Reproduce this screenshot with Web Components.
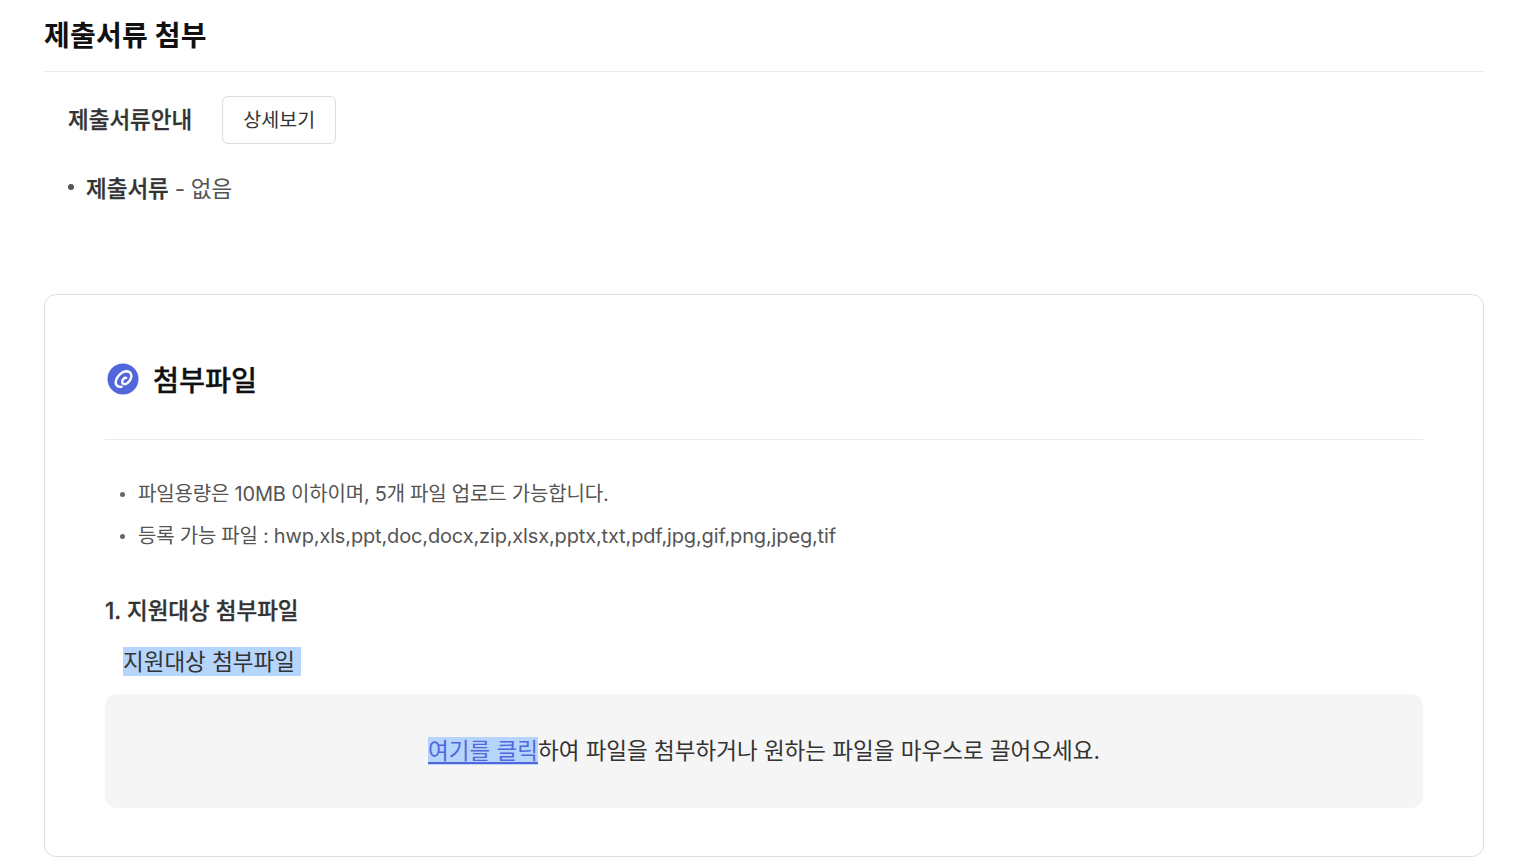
<!DOCTYPE html>
<html lang="ko">
<head>
<meta charset="utf-8">
<title>제출서류 첨부</title>
<style>
    html, body { margin: 0; background: #fff; }
    body {
        font-family: Inter, "Noto Sans CJK KR", sans-serif;
        color: #333;
        overflow: hidden;
    }
</style>
</head>
<body>
<doc-section heading="제출서류 첨부">
    <doc-guide label="제출서류안내" action="상세보기">
        <b>제출서류</b> - 없음
    </doc-guide>
    <attach-card heading="첨부파일">
        <file-rule>파일용량은 10MB 이하이며, 5개 파일 업로드 가능합니다.</file-rule>
        <file-rule>등록 가능 파일 : hwp,xls,ppt,doc,docx,zip,xlsx,pptx,txt,pdf,jpg,gif,png,jpeg,tif</file-rule>
        <attach-group slot="groups" heading="1. 지원대상 첨부파일" label="지원대상 첨부파일"></attach-group>
    </attach-card>
</doc-section>

<script>
class DocSection extends HTMLElement {
    constructor() {
        super();
        this.attachShadow({ mode: 'open' });
        this.shadowRoot.innerHTML = `
            <style>
                :host {
                    display: block;
                    padding: 0 46px 0 44px;
                }
                h2 {
                    margin: 0;
                    height: 71px;
                    line-height: 72px;
                    font-size: 28px;
                    font-weight: 700;
                    letter-spacing: 0.2px;
                    color: #111;
                    border-bottom: 1px solid #ebebeb;
                }
            </style>
            <h2>${this.getAttribute('heading')}</h2>
            <slot></slot>
        `;
    }
}

class DocGuide extends HTMLElement {
    constructor() {
        super();
        this.attachShadow({ mode: 'open' });
        this.shadowRoot.innerHTML = `
            <style>
                :host {
                    display: block;
                    padding: 24px 0 0 24px;
                    height: 198px;
                    box-sizing: border-box;
                    margin-bottom: 24px;
                }
                .row {
                    display: flex;
                    align-items: center;
                    gap: 30px;
                }
                .label {
                    padding-bottom: 5px;
                    font-size: 22.5px;
                    font-weight: 500;
                    -webkit-text-stroke: 0.3px #333;
                    color: #333;
                }
                button {
                    width: 114px;
                    height: 48px;
                    padding: 0 0 3px;
                    font: inherit;
                    font-size: 19.5px;
                    color: #333;
                    background: #fff;
                    border: 1px solid #ddd;
                    border-radius: 6px;
                }
                .item {
                    display: flex;
                    align-items: center;
                    margin-top: 27px;
                    font-size: 22.5px;
                    line-height: 36px;
                    word-spacing: -0.5px;
                    color: #555;
                }
                .item::before {
                    content: "";
                    width: 6px;
                    height: 6px;
                    margin-right: 12px;
                    margin-top: -5px;
                    border-radius: 50%;
                    background: #555;
                }
                ::slotted(b) {
                    color: #333;
                    font-weight: 500;
                    -webkit-text-stroke: 0.3px #333;
                }
            </style>
            <div class="row">
                <span class="label">${this.getAttribute('label')}</span>
                <button type="button">${this.getAttribute('action')}</button>
            </div>
            <div class="item"><span><slot></slot></span></div>
        `;
    }
}

class AttachCard extends HTMLElement {
    constructor() {
        super();
        this.attachShadow({ mode: 'open' });
        this.shadowRoot.innerHTML = `
            <style>
                :host {
                    display: block;
                    height: 563px;
                    box-sizing: border-box;
                    padding: 0 60px;
                    border: 1px solid #ddd;
                    border-radius: 12px;
                }
                header {
                    display: flex;
                    align-items: center;
                    gap: 14px;
                    height: 145px;
                    box-sizing: border-box;
                    padding: 24px 0 0 2px;
                    border-bottom: 1px solid #ebebeb;
                    font-size: 28.3px;
                    font-weight: 500;
                    -webkit-text-stroke: 0.3px #111;
                    color: #111;
                }
                header span { padding-bottom: 2px; }
                svg { display: block; width: 32px; height: 32px; }
                .rules { margin-top: 33px; }
            </style>
            <header>
                <svg viewBox="0 0 32 32" aria-hidden="true">
                    <circle cx="16" cy="16" r="15.500" fill="#5367dc"/>
                    <path d="M14.500 23.800C10.500 24.500 7.800 21.500 9 17.500 10.300 13 14.500 8.600 19 8.200 23.500 8 25.500 11.800 23.800 15.800 22.300 19.300 18.800 22 16.500 21 14.500 20 15 17.300 16.500 15.800 17.300 15 18.300 14.600 19.200 14.800" fill="none" stroke="#fff" stroke-width="2.400" stroke-linecap="round"/>
                </svg>
                <span>${this.getAttribute('heading')}</span>
            </header>
            <div class="rules"><slot></slot></div>
            <slot name="groups"></slot>
        `;
    }
}

class FileRule extends HTMLElement {
    constructor() {
        super();
        this.attachShadow({ mode: 'open' });
        this.shadowRoot.innerHTML = `
            <style>
                :host {
                    display: flex;
                    align-items: center;
                    padding-left: 15px;
                    font-size: 20px;
                    line-height: 42px;
                    letter-spacing: -0.15px;
                    word-spacing: -0.3px;
                    color: #555;
                }
                i {
                    flex: none;
                    width: 5px;
                    height: 5px;
                    margin-right: 13px;
                    border-radius: 50%;
                    background: #666;
                }
            </style>
            <i></i><span><slot></slot></span>
        `;
    }
}

class AttachGroup extends HTMLElement {
    constructor() {
        super();
        this.attachShadow({ mode: 'open' });
        this.shadowRoot.innerHTML = `
            <style>
                :host { display: block; margin-top: 36px; }
                h3 {
                    margin: 0;
                    font-size: 22.5px;
                    line-height: 36px;
                    font-weight: 500;
                    -webkit-text-stroke: 0.3px #333;
                    color: #333;
                }
                .label {
                    display: flex;
                    margin: 18px 0 18px 18px;
                    font-size: 22.5px;
                    line-height: 29px;
                    color: #333;
                }
                mark {
                    background: #b5d5fd;
                    color: inherit;
                    padding-right: 6px;
                }
                .drop {
                    display: flex;
                    align-items: center;
                    justify-content: center;
                    height: 114px;
                    box-sizing: border-box;
                    padding-bottom: 1px;
                    border-radius: 12px;
                    background: #f5f5f5;
                    font-size: 22.5px;
                    line-height: 28px;
                    color: #333;
                }
                a {
                    display: inline-block;
                    color: #5367dc;
                    background: #b5d5fd;
                    text-decoration: underline;
                    text-decoration-thickness: 2px;
                    text-underline-offset: 3px;
                }
            </style>
            <h3>${this.getAttribute('heading')}</h3>
            <div class="label"><mark>${this.getAttribute('label')}</mark></div>
            <div class="drop"><span><a href="#">여기를 클릭</a>하여 파일을 첨부하거나 원하는 파일을 마우스로 끌어오세요.</span></div>
        `;
    }
}

customElements.define('doc-section', DocSection);
customElements.define('doc-guide', DocGuide);
customElements.define('attach-card', AttachCard);
customElements.define('file-rule', FileRule);
customElements.define('attach-group', AttachGroup);
</script>
</body>
</html>
